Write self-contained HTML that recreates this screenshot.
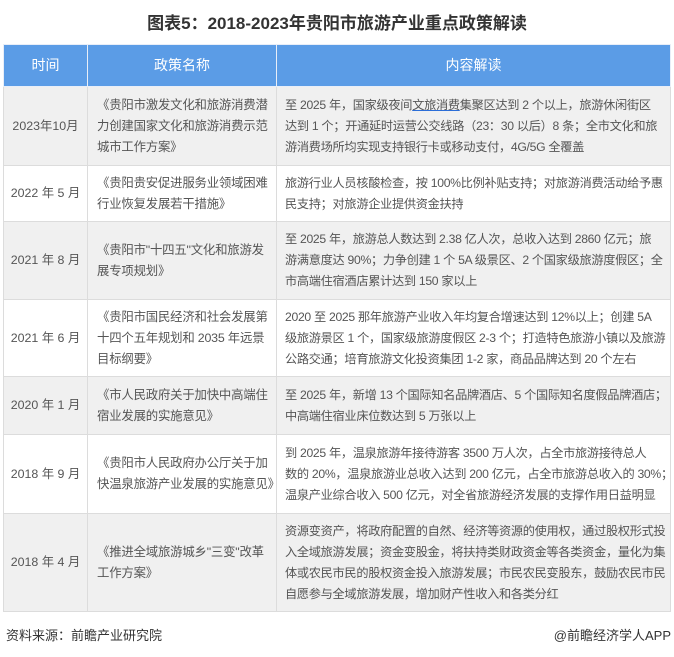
<!DOCTYPE html>
<html><head><meta charset="utf-8"><style>
*{margin:0;padding:0;box-sizing:border-box}
body{width:674px;height:657px;background:#fff;font-family:"Liberation Sans","Noto Sans CJK SC",sans-serif;color:#555;position:relative;overflow:hidden}
h1{position:absolute;top:9px;left:0;width:674px;text-align:center;font-size:17px;font-weight:bold;color:#333}
table{position:absolute;left:3px;top:44px;width:667px;border-collapse:collapse;table-layout:fixed}
td,th{border:1px solid #dcdcdc;font-size:12.4px;line-height:21px;vertical-align:middle;white-space:nowrap;overflow:hidden}
th{background:#5b9ce6;color:#fff;font-weight:normal;font-size:14px;height:42px;border-color:#e8eef8}
td.t{text-align:center;padding:0 2px}
td.n{padding:0 2px 0 9px;letter-spacing:-0.2px}
td.c{padding:0 2px 0 8px;font-size:12.2px;letter-spacing:-0.3px}
tr.g td{background:#f0f0f0}
tr.w td{background:#fff}
.src{position:absolute;top:625px;left:6px;font-size:13px;color:#333}
.app{position:absolute;top:625px;right:3px;font-size:13px;color:#333}
u{text-decoration-color:#2b6ed9}
</style></head><body>
<h1>图表5：2018-2023年贵阳市旅游产业重点政策解读</h1>
<table>
<colgroup><col style="width:84px"><col style="width:189px"><col style="width:394px"></colgroup>
<tr><th>时间</th><th>政策名称</th><th>内容解读</th></tr>
<tr class="g" style="height:79px"><td class="t">2023年10月</td><td class="n">《贵阳市激发文化和旅游消费潜<br>力创建国家文化和旅游消费示范<br>城市工作方案》</td><td class="c">至 2025 年，国家级夜间<u>文旅消费</u>集聚区达到 2 个以上，旅游休闲街区<br>达到 1 个；开通延时运营公交线路（23：30 以后）8 条；全市文化和旅<br>游消费场所均实现支持银行卡或移动支付，4G/5G 全覆盖</td></tr>
<tr class="w" style="height:56px"><td class="t">2022 年 5 月</td><td class="n">《贵阳贵安促进服务业领域困难<br>行业恢复发展若干措施》</td><td class="c">旅游行业人员核酸检查，按 100%比例补贴支持；对旅游消费活动给予惠<br>民支持；对旅游企业提供资金扶持</td></tr>
<tr class="g" style="height:78px"><td class="t">2021 年 8 月</td><td class="n">《贵阳市"十四五"文化和旅游发<br>展专项规划》</td><td class="c">至 2025 年，旅游总人数达到 2.38 亿人次，总收入达到 2860 亿元；旅<br>游满意度达 90%；力争创建 1 个 5A 级景区、2 个国家级旅游度假区；全<br>市高端住宿酒店累计达到 150 家以上</td></tr>
<tr class="w" style="height:77px"><td class="t">2021 年 6 月</td><td class="n">《贵阳市国民经济和社会发展第<br>十四个五年规划和 2035 年远景<br>目标纲要》</td><td class="c">2020 至 2025 那年旅游产业收入年均复合增速达到 12%以上；创建 5A<br>级旅游景区 1 个，国家级旅游度假区 2-3 个；打造特色旅游小镇以及旅游<br>公路交通；培育旅游文化投资集团 1-2 家，商品品牌达到 20 个左右</td></tr>
<tr class="g" style="height:58px"><td class="t">2020 年 1 月</td><td class="n">《市人民政府关于加快中高端住<br>宿业发展的实施意见》</td><td class="c">至 2025 年，新增 13 个国际知名品牌酒店、5 个国际知名度假品牌酒店；<br>中高端住宿业床位数达到 5 万张以上</td></tr>
<tr class="w" style="height:79px"><td class="t">2018 年 9 月</td><td class="n">《贵阳市人民政府办公厅关于加<br>快温泉旅游产业发展的实施意见》</td><td class="c">到 2025 年，温泉旅游年接待游客 3500 万人次，占全市旅游接待总人<br>数的 20%，温泉旅游业总收入达到 200 亿元，占全市旅游总收入的 30%；<br>温泉产业综合收入 500 亿元，对全省旅游经济发展的支撑作用日益明显</td></tr>
<tr class="g" style="height:98px"><td class="t">2018 年 4 月</td><td class="n">《推进全域旅游城乡"三变"改革<br>工作方案》</td><td class="c">资源变资产，将政府配置的自然、经济等资源的使用权，通过股权形式投<br>入全域旅游发展；资金变股金，将扶持类财政资金等各类资金，量化为集<br>体或农民市民的股权资金投入旅游发展；市民农民变股东，鼓励农民市民<br>自愿参与全域旅游发展，增加财产性收入和各类分红</td></tr>
</table>
<div class="src">资料来源：前瞻产业研究院</div>
<div class="app">@前瞻经济学人APP</div>
</body></html>
